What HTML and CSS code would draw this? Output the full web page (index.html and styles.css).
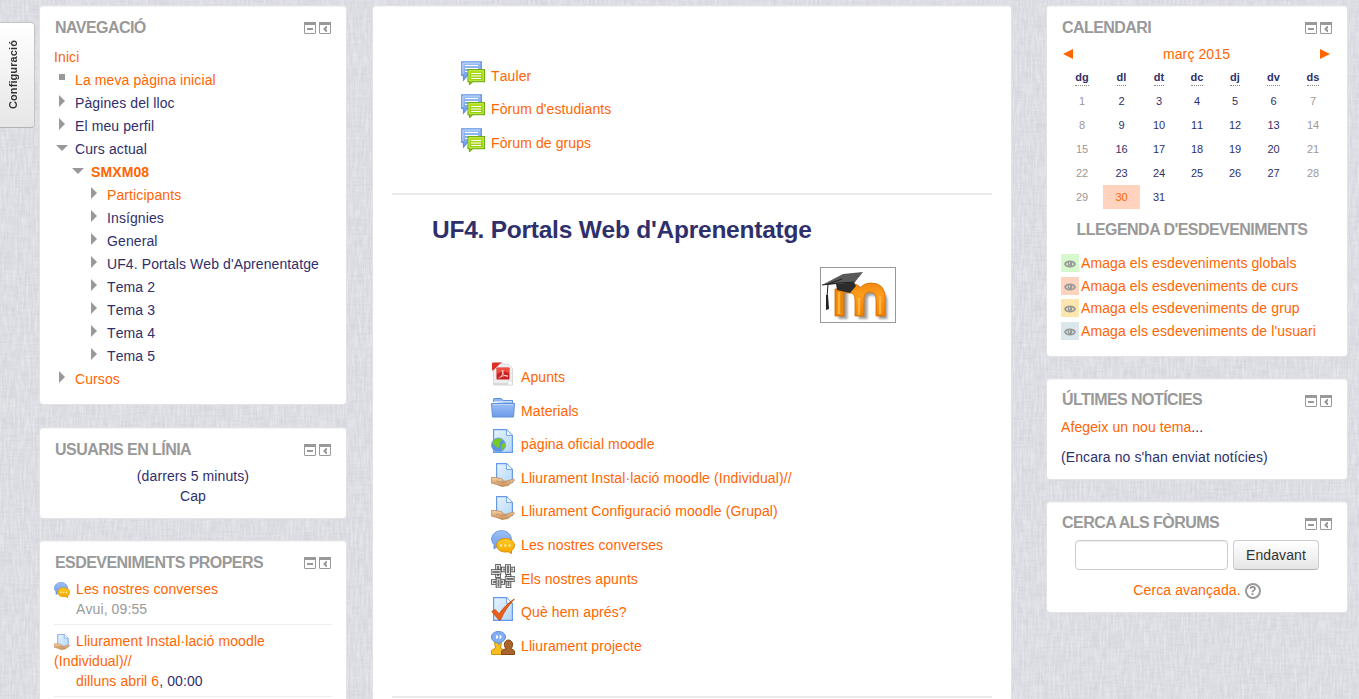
FILE: index.html
```html
<!DOCTYPE html>
<html lang="ca">
<head>
<meta charset="utf-8">
<title>SMXM08</title>
<link rel="stylesheet" href="styles.css">
</head>
<body>
<svg class="linen" aria-hidden="true">
  <filter id="weaveH" x="0" y="0" width="100%" height="100%"><feTurbulence type="fractalNoise" baseFrequency="0.06 0.45" numOctaves="2" seed="4"/><feColorMatrix values="0 0 0 0 .45  0 0 0 0 .46  0 0 0 0 .54  .4 0 0 0 -.15"/></filter>
  <filter id="weaveV" x="0" y="0" width="100%" height="100%"><feTurbulence type="fractalNoise" baseFrequency="0.45 0.06" numOctaves="2" seed="9"/><feColorMatrix values="0 0 0 0 1  0 0 0 0 1  0 0 0 0 1  .7 0 0 0 -.25"/></filter>
  <rect width="100%" height="100%" filter="url(#weaveH)"/>
  <rect width="100%" height="100%" filter="url(#weaveV)"/>
</svg>

<svg class="defs" aria-hidden="true">
  <defs>
    <linearGradient id="blue" x2="0" y2="1"><stop stop-color="#9cc0f5"/><stop offset="1" stop-color="#6d9be8"/></linearGradient>
    <linearGradient id="green" x2="0" y2="1"><stop stop-color="#b4e01c"/><stop offset="1" stop-color="#8cc60c"/></linearGradient>
    <linearGradient id="paper" x2="1" y2="1"><stop stop-color="#e6f3fe"/><stop offset="1" stop-color="#b5d8f8"/></linearGradient>
    <linearGradient id="skin" x2="0" y2="1"><stop stop-color="#f3d2a8"/><stop offset="1" stop-color="#c98d58"/></linearGradient>
    <linearGradient id="gold" x2="0" y2="1"><stop stop-color="#ffc928"/><stop offset="1" stop-color="#f5a800"/></linearGradient>
    <linearGradient id="arch" x2="0" y2="1"><stop stop-color="#f08a10"/><stop offset=".35" stop-color="#ff9c1c"/><stop offset="1" stop-color="#f08000"/></linearGradient>
    <filter id="soft" x="-20%" y="-20%" width="150%" height="150%"><feGaussianBlur stdDeviation="1.2"/></filter>
    <g id="strand"><rect x="-.2" y="-2.800" width="14.400" height="5.600" fill="#555"/><rect x=".9" y="-1.800" width="12.200" height="3.600" fill="#fff"/><rect x="1.800" y="-1" width="10.400" height="2" fill="#777"/></g>
  </defs>
  <symbol id="dock" viewBox="0 0 27 12">
    <g fill="none" stroke="#999"><rect x=".5" y=".5" width="11" height="11" rx=".5"/><rect x="15.500" y=".5" width="11" height="11" rx=".5"/></g>
    <path d="M0 0h12v3H0zM15 0h12v3H15zM3 6h6v2H3zM19 7l3-3h1v2l-1 1 1 1v2h-1z" fill="#999"/>
  </symbol>
  <symbol id="forum" viewBox="0 0 24 24">
    <path d="M.8.8h19.500v13.500H6.500L2.500 19v-4.700H.8z" fill="url(#blue)" stroke="#6495e4" stroke-width="1.300"/>
    <path d="M1.900 13V2h17" fill="none" stroke="#c3dafb"/>
    <path d="M4 4.500h13M4 7.500h13M4 10.500h3" stroke="#fff" stroke-width="1.200"/>
    <path d="M7 8.700h16.400v12H11.500L8.500 23.500v-2.800H7z" fill="url(#green)" stroke="#6fae12" stroke-width="1.200"/>
    <path d="M8 19.700V9.700h14.400v10z" fill="none" stroke="#c3e956"/>
    <path d="M10 12.500h10M10 15h10M10 17.500h10" stroke="#fff" stroke-width="1.200"/>
  </symbol>
  <symbol id="pdf" viewBox="0 0 24 24">
    <path d="M5 2h12l4.500 4v17H2.500V9z" fill="#eee" stroke="#dadade"/>
    <path d="M2.500 21h19v2h-19z" fill="#d9d9dc"/><path d="M17 19h4v4h-4z" fill="#fff" stroke="#ccc" stroke-width=".5"/>
    <path d="M1 9L2 2 4 .5h8z" fill="#ddd"/><path d="M1 6.500V1.500Q1 .5 2 .5h9L1.500 9z" fill="#dc3026"/>
    <path d="M3.500 7.500l6-6L12 4l-5.500 5z" fill="#f4f4f4"/>
    <rect x="5.500" y="5.500" width="13" height="12" rx=".7" fill="#cc2020"/><path d="M6 6h12v5Q12 8 6 12z" fill="#f04c40"/>
    <path d="M7.500 16c3-1 5-4 4.500-7.500-.8-1.300-1 0-.5 2 .8 2.600 3 4 5.500 3.700-2-1.300-5.300-.5-7.500.8" fill="none" stroke="#fff" stroke-width=".7"/>
  </symbol>
  <symbol id="folder" viewBox="0 0 24 24">
    <path d="M2.500 6V3.200q0-.7.700-.7h7l2 2h9.300v3" fill="#8cb5f4" stroke="#5f90dc"/>
    <path d="M3 5.700h18" stroke="#dceafe"/>
    <path d="M.5 7.500h23L22.500 21h-21z" fill="url(#blue)" stroke="#5f90dc"/><path d="M1.700 8.500h20.600" stroke="#bdd7fc"/>
  </symbol>
  <symbol id="sheet" viewBox="0 0 24 24">
    <path d="M2.600.6h13l5.800 5.800v17H2.600z" fill="url(#paper)" stroke="#6799e8" stroke-width="1.200"/>
    <path d="M15.500.8v5.700h5.700" fill="#eef6ff" stroke="#78a6e8"/>
  </symbol>
  <symbol id="url" viewBox="0 0 24 24">
    <use href="#sheet" width="24" height="24"/>
    <circle cx="7.500" cy="16" r="7" fill="#5c92df" stroke="#78a6e8"/>
    <path d="M1.300 14c2-5 6.500-5 9-4l1 2-3 1 1 3-2 3-3-2zM11 15l3-1v4l-3 3-1-2z" fill="#74ca1f"/>
  </symbol>
  <symbol id="assign" viewBox="0 0 24 24">
    <path d="M5.600.6h10l5.800 5.800v13H5.600z" fill="url(#paper)" stroke="#6799e8" stroke-width="1.200"/><path d="M15.500.8v5.700h5.700" fill="#eef6ff" stroke="#78a6e8"/>
    <path d="M.3 14.500h4.500l5 1c2 .4 3 2 1.500 2.500l4 .3 6-2c1.800-.5 2.700.7 1.500 1.800L17 22.500l-6 1-5-2-5.700-1.500z" fill="url(#skin)" stroke="#bd8755" stroke-width=".8"/>
    <path d="M5 18l6 1.500 5-.5" fill="none" stroke="#c18a58" stroke-width=".8"/>
  </symbol>
  <symbol id="chat" viewBox="0 0 24 24">
    <path d="M10.500.7c5.500 0 9.800 3.600 9.800 8.300s-4.300 8.300-9.800 8.300c-1.500 0-3-.2-4.200-.7L3 19v-4.500C1.500 13 .7 11 .7 9 .7 4.300 5 .7 10.500.7z" fill="url(#blue)" stroke="#6595e0"/>
    <path d="M14.500 8.500c5 0 8.900 3 8.900 6.800 0 2.500-1.200 4.300-2.900 5.300v3l-3.300-1.900c-6 1.300-11.500-1.700-11.500-6.400 0-3.800 3.800-6.800 8.800-6.800z" fill="url(#gold)" stroke="#d98e00"/>
    <path d="M9 14.500h2v2H9zm4.300 0h2v2h-2zm4.300 0h2v2h-2z" fill="#fff3bd"/>
  </symbol>
  <symbol id="wiki" viewBox="0 0 24 24">
    <use href="#strand" transform="translate(10 5.500)"/>
    <use href="#strand" transform="translate(0 18)"/>
    <use href="#strand" transform="translate(7 0) rotate(90)"/>
    <use href="#strand" transform="translate(17.500 10) rotate(90)"/>
    <use href="#strand" transform="translate(0 8) scale(.72 1)"/>
    <use href="#strand" transform="translate(14 15) scale(.72 1)"/>
    <use href="#strand" transform="translate(17 0) rotate(90) scale(.76 1)"/>
    <use href="#strand" transform="translate(7.500 14) rotate(90) scale(.72 1)"/>
  </symbol>
  <symbol id="quiz" viewBox="0 0 24 24">
    <use href="#sheet" width="24" height="24"/>
    <path d="M.7 14.500l3.500-1.900 4 4.200C12 11 17 6 23.300 2 17 9 13 15 9.500 23H8z" fill="#e95e18" stroke="#c4470b" stroke-width=".8"/>
  </symbol>
  <symbol id="workshop" viewBox="0 0 24 24">
    <path d="M.5 23.500v-4l4-2.500-1-6h7l-1 6 4 2.500v4z" fill="#f9bd22" stroke="#cf920b"/>
    <path d="M10.500 23.500v-3.600l4.300-2.400c-3-4-.8-8.500 2.700-8.500s5.700 4.500 2.700 8.500l3.300 2.400v3.600z" fill="#a9642c" stroke="#814716"/>
    <path d="M7.500.5c4 0 7 2.300 7 5.500 0 2.500-2 4.500-4.800 5.200L8 13.500l-1-2C3 11.500.5 9 .5 6 .5 2.800 3.500.5 7.500.5z" fill="#82adf0" stroke="#5d8eda"/>
    <path d="M5 4.500h2v2L5.500 8H5zM8.500 4.500h2v2L9 8h-.5z" fill="#fff"/>
  </symbol>
  <symbol id="eye" viewBox="0 0 12 8">
    <path d="M.9 4C2.500.4 9.500.4 11.100 4 9.500 7.600 2.500 7.600.9 4z" fill="none" stroke="#999" stroke-width="1.700"/>
    <circle cx="6" cy="4" r="2.400" fill="#999"/><path d="M5.500 2.300v2.200" stroke="#fff" stroke-width=".7"/>
  </symbol>
</svg>

<div class="dock-tab"><span>Configuració</span></div>

<div class="page">
  <aside class="column">
    <section class="panel panel-nav">
      <header><h2>Navegació</h2><svg class="dock-icon"><use href="#dock"/></svg></header>
      <ul class="tree">
        <li class="root"><a href="#">Inici</a></li>
        <li class="leaf"><a href="#">La meva pàgina inicial</a></li>
        <li class="closed">Pàgines del lloc</li>
        <li class="closed">El meu perfil</li>
        <li class="open">Curs actual</li>
        <li class="open level2"><a href="#"><b>SMXM08</b></a></li>
        <li class="closed level3"><a href="#">Participants</a></li>
        <li class="closed level3">Insígnies</li>
        <li class="closed level3">General</li>
        <li class="closed level3">UF4. Portals Web d'Aprenentatge</li>
        <li class="closed level3">Tema 2</li>
        <li class="closed level3">Tema 3</li>
        <li class="closed level3">Tema 4</li>
        <li class="closed level3">Tema 5</li>
        <li class="closed"><a href="#">Cursos</a></li>
      </ul>
    </section>
    <section class="panel panel-users">
      <header><h2>Usuaris en línia</h2><svg class="dock-icon"><use href="#dock"/></svg></header>
      <p class="centered">(darrers 5 minuts)<br>Cap</p>
    </section>
    <section class="panel panel-events">
      <header><h2>Esdeveniments propers</h2><svg class="dock-icon"><use href="#dock"/></svg></header>
      <div class="event"><svg><use href="#chat"/></svg><a href="#">Les nostres converses</a><div class="date muted">Avui, 09:55</div></div>
      <div class="event"><svg><use href="#assign"/></svg><a href="#">Lliurament Instal·lació moodle (Individual)//</a><div class="date"><a href="#">dilluns abril 6</a>, 00:00</div></div>
    </section>
  </aside>

  <main class="content">
    <ul class="activities forums">
      <li><svg><use href="#forum"/></svg><a href="#">Tauler</a></li>
      <li><svg><use href="#forum"/></svg><a href="#">Fòrum d'estudiants</a></li>
      <li><svg><use href="#forum"/></svg><a href="#">Fòrum de grups</a></li>
    </ul>
    <section class="topic">
      <h3>UF4. Portals Web d'Aprenentatge</h3>
      <svg class="moodle-logo" viewBox="0 0 76 56">
        <rect x=".5" y=".5" width="75" height="55" fill="#fff" stroke="#999"/>
        <path d="M22 51V24M42 51V32q0-9-7-9M42 32q0-9 9-9t11 9v19" transform="translate(1 1)" fill="none" stroke="#888" stroke-width="9" filter="url(#soft)" opacity=".8"/>
        <path d="M15 22h9v27h-9z" fill="#ef8606" stroke="#c96400" stroke-width=".8"/>
        <path d="M35 49V33q0-7-5-7h-5v-8q3-1.500 7-1.500 5 0 8.500 4 4-4.500 10.500-4.500Q65 16 65 31v18H56V32q0-7-6-7t-6 7v17z" fill="url(#arch)" stroke="#d56a00" stroke-width=".8"/>
        <path d="M19 25v22M39 31v17M60 29v18" stroke="#ffbd50" stroke-width="2.500" opacity=".8"/>
        <path d="M16 17l17-3 3 5-6 7-13-3z" fill="#2c2c2c"/>
        <path d="M2 18L23 7l20-2-8 10-17 2z" fill="#595959"/><path d="M2 18l17-2 16-1" fill="none" stroke="#222"/>
        <path d="M22 12l-14 5-1 13" fill="none" stroke="#222"/><path d="M6 28h2l1 14-3 1z" fill="#222"/>
      </svg>
      <ul class="activities resources">
        <li><svg><use href="#pdf"/></svg><a href="#">Apunts</a></li>
        <li><svg><use href="#folder"/></svg><a href="#">Materials</a></li>
        <li><svg><use href="#url"/></svg><a href="#">pàgina oficial moodle</a></li>
        <li><svg><use href="#assign"/></svg><a href="#">Lliurament Instal·lació moodle (Individual)//</a></li>
        <li><svg><use href="#assign"/></svg><a href="#">Lliurament Configuració moodle (Grupal)</a></li>
        <li><svg><use href="#chat"/></svg><a href="#">Les nostres converses</a></li>
        <li><svg><use href="#wiki"/></svg><a href="#">Els nostres apunts</a></li>
        <li><svg><use href="#quiz"/></svg><a href="#">Què hem aprés?</a></li>
        <li><svg><use href="#workshop"/></svg><a href="#">Lliurament projecte</a></li>
      </ul>
    </section>
    <div class="rule"></div>
  </main>

  <aside class="column">
    <section class="panel panel-calendar">
      <header><h2>Calendari</h2><svg class="dock-icon"><use href="#dock"/></svg></header>
      <div class="month"><svg viewBox="0 0 10 10"><path d="M0 5L10 0v10z"/></svg><a href="#">març 2015</a><svg viewBox="0 0 10 10"><path d="M10 5L0 0v10z"/></svg></div>
      <div class="days">
        <b><abbr>dg</abbr></b><b><abbr>dl</abbr></b><b><abbr>dt</abbr></b><b><abbr>dc</abbr></b><b><abbr>dj</abbr></b><b><abbr>dv</abbr></b><b><abbr>ds</abbr></b>
        <span class="muted">1</span><span>2</span><span>3</span><span>4</span><span>5</span><span>6</span><span class="muted">7</span>
        <span class="muted">8</span><span>9</span><span>10</span><span>11</span><span>12</span><span>13</span><span class="muted">14</span>
        <span class="muted">15</span><span>16</span><span>17</span><span>18</span><span>19</span><span>20</span><span class="muted">21</span>
        <span class="muted">22</span><span>23</span><span>24</span><span>25</span><span>26</span><span>27</span><span class="muted">28</span>
        <span class="muted">29</span><span class="today">30</span><span>31</span>
      </div>
      <h2 class="legend-title">Llegenda d'esdeveniments</h2>
      <ul class="legend">
        <li><i class="global"><svg><use href="#eye"/></svg></i><a href="#">Amaga els esdeveniments globals</a></li>
        <li><i class="course"><svg><use href="#eye"/></svg></i><a href="#">Amaga els esdeveniments de curs</a></li>
        <li><i class="group"><svg><use href="#eye"/></svg></i><a href="#">Amaga els esdeveniments de grup</a></li>
        <li><i class="user"><svg><use href="#eye"/></svg></i><a href="#">Amaga els esdeveniments de l'usuari</a></li>
      </ul>
    </section>
    <section class="panel panel-news">
      <header><h2>Últimes notícies</h2><svg class="dock-icon"><use href="#dock"/></svg></header>
      <p><a href="#">Afegeix un nou tema</a>...</p>
      <p>(Encara no s'han enviat notícies)</p>
    </section>
    <section class="panel panel-search">
      <header><h2>Cerca als fòrums</h2><svg class="dock-icon"><use href="#dock"/></svg></header>
      <form><input type="text" aria-label="Cerca"><button type="button">Endavant</button></form>
      <div class="advanced"><a href="#">Cerca avançada.</a><span class="help">?</span></div>
    </section>
  </aside>
</div>
</body>
</html>
```
FILE: styles.css
```css
* { box-sizing: border-box; }
body {
  margin: 0;
  height: 699px;
  overflow: hidden;
  background: #dbdce2;
  color: #2f2f6b;
  font: 14px/20px "Liberation Sans", Arial, sans-serif;
  font-kerning: none;
  letter-spacing: 0.1px;
}
a { color: #ff6500; text-decoration: none; }
ul { list-style: none; margin: 0; padding: 0; }
p, h2, h3 { margin: 0; }
.muted { color: #999; }
.defs { position: absolute; width: 0; height: 0; }
.linen { position: absolute; inset: 0; width: 100%; height: 100%; z-index: -1; }

.dock-tab {
  position: absolute;
  left: -1px;
  top: 22px;
  width: 36px;
  height: 106px;
  display: flex;
  align-items: center;
  justify-content: center;
  background: linear-gradient(#fff, #e6e6e6);
  border: 1px solid #c4c4c4;
  border-bottom-color: #b3b3b3;
  border-radius: 0 4px 4px 0;
  color: #333;
  font-size: 11px;
  font-weight: bold;
  letter-spacing: 0.1px;
}
.dock-tab span { writing-mode: vertical-rl; transform: rotate(180deg); padding-left: 8px; }

.page {
  display: grid;
  grid-template-columns: 308px 640px 302px;
  grid-template-rows: 694px;
  column-gap: 25px;
  height: 699px;
  overflow: hidden;
  padding: 5px 0 0 39px;
}
.page > :last-child { margin-left: 9px; margin-right: -9px; }
.column { display: flex; flex-direction: column; gap: 22px; }
.panel, .content {
  flex-shrink: 0;
  background: #fff;
  border: 1px solid #e3e3e6;
  border-radius: 4px;
  box-shadow: inset 0 1px 1px rgba(0, 0, 0, .05);
}
.panel { padding: 11px 14px 0; }
.panel header { display: flex; height: 30px; justify-content: space-between; padding: 0 1px; }
h2 {
  color: #999;
  font-size: 16px;
  line-height: 20px;
  font-kerning: normal;
  text-transform: uppercase;
  letter-spacing: -0.55px;
}
.panel-nav h2, .panel-users h2, .panel-events h2, .panel-calendar header h2 { padding-top: 1px; }
.dock-icon { width: 27px; height: 12px; margin-top: 5px; }

.panel-nav { height: 400px; }
.tree { line-height: 23px; margin-top: -1px; }
.tree li { position: relative; height: 23px; padding-left: 21px; }
.tree .root { padding-left: 0; }
.tree .level2 { margin-left: 16px; }
.tree .level3 { margin-left: 32px; }
.tree li::before { position: absolute; background: #999; }
.leaf::before { content: ""; left: 5px; top: 5px; width: 6px; height: 6px; }
.closed::before { content: ""; left: 5px; top: 3px; width: 6px; height: 12px; clip-path: polygon(0 0, 100% 50%, 0 100%); }
.open::before { content: ""; left: 2px; top: 7px; width: 12px; height: 6px; clip-path: polygon(0 0, 100% 0, 50% 100%); }

.panel-users { height: 92px; }
.centered { text-align: center; margin-top: -3px; }
.panel-events { height: 159px; margin-top: -1px; border-bottom: 0; border-radius: 4px 4px 0 0; }
.event { padding-bottom: 5px; margin-bottom: 6px; border-bottom: 1px solid #eee; }
.event:last-child { margin-bottom: 0; }
.panel-events header { height: 27px; }
.event svg { width: 16px; height: 16px; margin-right: 6px; vertical-align: -4px; }
.date { padding-left: 22px; }

.content { height: 694px; padding: 55px 19px 0; border-bottom: 0; border-radius: 4px 4px 0 0; }
.activities { padding-left: 69px; }
.forums { height: 134px; border-bottom: 2px solid #e9e9e9; }
.activities li { display: flex; height: 33.6px; gap: 6px; }
.forums li { height: 33.4px; }
.activities li svg { width: 24px; height: 24px; }
.activities a { padding-top: 5px; }
.topic { display: flex; flex-direction: column; padding: 19px 0 0 40px; height: 501px; }
h3 { font-size: 24.5px; line-height: 32px; letter-spacing: -0.24px; }
.moodle-logo { width: 76px; height: 56px; margin: 21px 0 0 388px; }
.resources { margin-top: 39px; padding-left: 59px; }
.rule { height: 2px; background: #e9e9e9; }

.panel-calendar { height: 352px; }
.panel-calendar header { height: 27px; }
.month { display: flex; align-items: center; justify-content: space-between; padding: 0 3px 0 2px; }
.month svg { width: 10px; height: 10px; fill: #ff6500; }
.days {
  display: grid;
  grid-template-columns: 42px 37px 38px 38px 38px 39px 40px;
  grid-auto-rows: 24px;
  margin-top: 1px;
  font-size: 11px;
  line-height: 24px;
  letter-spacing: 0;
  text-align: center;
}
.days abbr { display: inline-block; line-height: 15px; border-bottom: 1px dotted #888; }
.days .today { background: #ffd3bd; color: #ff6500; }
.legend-title { text-align: center; margin: 11px 10px 14px 0; }
.legend { display: grid; grid-auto-rows: 22.6px; }
.legend li { display: flex; gap: 2px; line-height: 19px; }
.legend i { display: flex; width: 18px; height: 18px; align-items: center; justify-content: center; padding-top: 2px; }
.legend svg { width: 12px; height: 8px; }
.global { background: #d6f8cd; }
.course { background: #ffd3bd; }
.group { background: #fee7ae; }
.user { background: #dce7ec; }

.panel-news { height: 102px; margin-top: -1px; }
.panel-news p { margin-bottom: 10px; }
.panel-news header { height: 27px; }
.panel-search { height: 112px; margin-top: -1px; }
.panel-search header { height: 27px; }
form { display: flex; gap: 5px; padding-left: 14px; }
input { width: 153px; height: 30px; border: 1px solid #ccc; border-radius: 4px; box-shadow: inset 0 1px 1px rgba(0, 0, 0, .075); }
button {
  width: 86px;
  height: 30px;
  padding: 0;
  border: 1px solid #ccc;
  border-bottom-color: #b3b3b3;
  border-radius: 4px;
  background: linear-gradient(#fff, #e6e6e6);
  color: #333;
  font: inherit;
  letter-spacing: 0.1px;
}
.advanced { display: flex; justify-content: center; gap: 4px; margin-top: 10px; }
.help {
  width: 16px;
  height: 16px;
  margin-top: 3px;
  border: 2px solid #999;
  border-radius: 50%;
  color: #888;
  font: bold 12px/12px "Liberation Sans", sans-serif;
  text-align: center;
}
```
